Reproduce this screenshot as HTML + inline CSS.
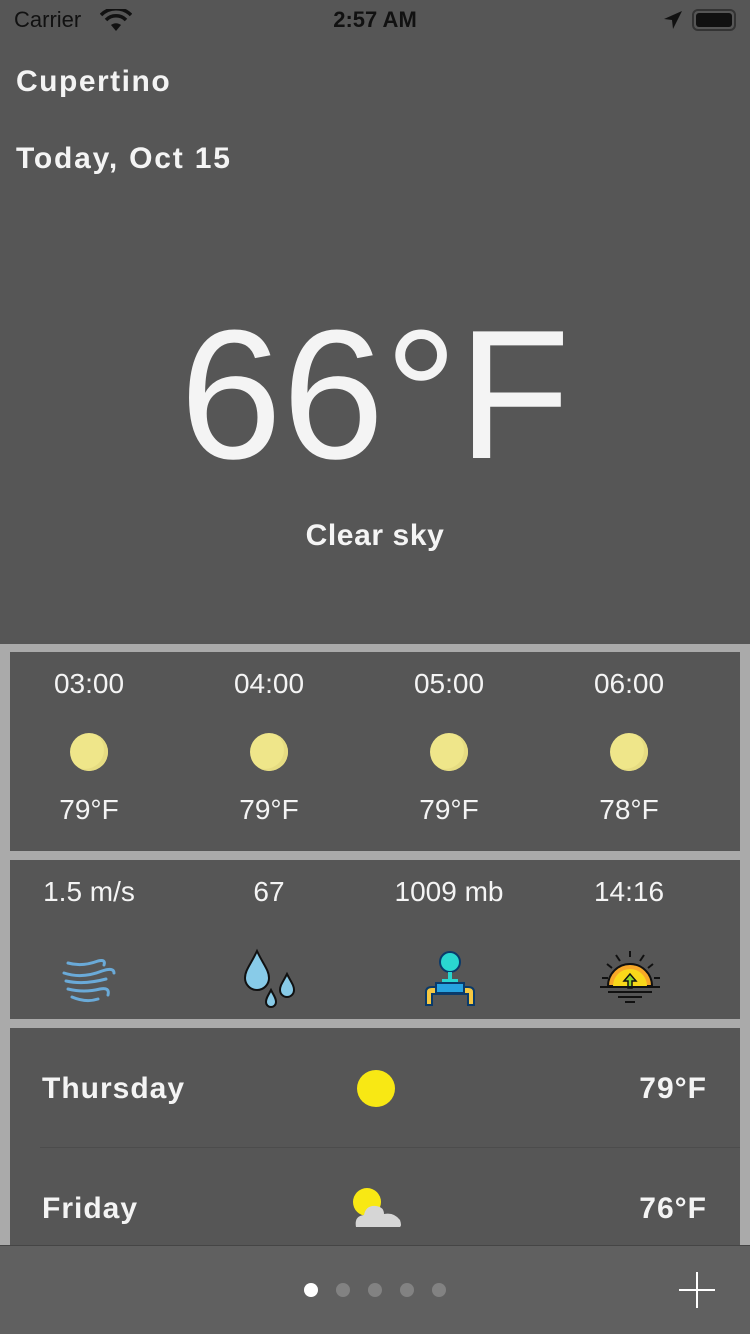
<!DOCTYPE html>
<html><head><meta charset="utf-8"><style>
*{margin:0;padding:0;box-sizing:border-box}
body{width:750px;height:1334px;background:#565656;position:relative;overflow:hidden;font-family:"Liberation Sans",sans-serif;color:#f4f4f4}
.a{position:absolute;white-space:nowrap}
.c{transform:translateX(-50%)}
.p{position:absolute;left:10px;width:730px;background:#565656}
.l{font-size:28px;font-weight:300}
.sun{position:absolute;width:38px;height:38px;border-radius:50%;background:#efe68a;box-shadow:inset -4px -2px 0 #e6dc82}
.b{font-size:30px;font-weight:bold;letter-spacing:1px}
</style></head><body>
<div class="a" style="left:14px;top:7px;font-size:22px;color:#111">Carrier</div>
<svg class="a" style="left:100px;top:9px" width="32" height="24" viewBox="0 0 32 24"><path d="M16 22 L11 16 A8 8 0 0 1 21 16Z" fill="#111"/><path d="M6 11 A14 14 0 0 1 26 11" stroke="#111" stroke-width="3.5" fill="none"/><path d="M1 6 A21 21 0 0 1 31 6" stroke="#111" stroke-width="3.5" fill="none"/></svg>
<div class="a c" style="left:375px;top:7px;font-size:22px;font-weight:bold;color:#111">2:57 AM</div>
<svg class="a" style="left:662px;top:10px" width="22" height="20" viewBox="0 0 22 20"><path d="M20 1 L2 9 L10 10 L11 19Z" fill="#111"/></svg>
<div class="a" style="left:692px;top:9px;width:44px;height:22px;border:2px solid #333;border-radius:6px;padding:2px"><div style="width:100%;height:100%;background:#111;border-radius:3px"></div></div>
<div class="a" style="left:16px;top:65px;font-size:30px;font-weight:bold;letter-spacing:1.5px">Cupertino</div>
<div class="a" style="left:16px;top:142px;font-size:30px;font-weight:bold;letter-spacing:1.8px">Today, Oct 15</div>
<div class="a c" style="left:375px;top:302px;font-size:184px;line-height:1">66°F</div>
<div class="a c" style="left:375px;top:519px;font-size:30px;font-weight:bold;letter-spacing:.6px">Clear sky</div>
<div class="a" style="left:0;top:644px;width:750px;height:601px;background:#aaa"></div>
<div class="p" style="top:652px;height:199px"></div>
<div class="p" style="top:860px;height:159px"></div>
<div class="p" style="top:1028px;height:217px"></div>
<div class="a c l" style="left:89px;top:668px">03:00</div>
<div class="a c l" style="left:269px;top:668px">04:00</div>
<div class="a c l" style="left:449px;top:668px">05:00</div>
<div class="a c l" style="left:629px;top:668px">06:00</div>
<div class="sun" style="left:70px;top:733px"></div>
<div class="sun" style="left:250px;top:733px"></div>
<div class="sun" style="left:430px;top:733px"></div>
<div class="sun" style="left:610px;top:733px"></div>
<div class="a c l" style="left:89px;top:794px">79°F</div>
<div class="a c l" style="left:269px;top:794px">79°F</div>
<div class="a c l" style="left:449px;top:794px">79°F</div>
<div class="a c l" style="left:629px;top:794px">78°F</div>
<div class="a c l" style="left:89px;top:876px">1.5 m/s</div>
<div class="a c l" style="left:269px;top:876px">67</div>
<div class="a c l" style="left:449px;top:876px">1009 mb</div>
<div class="a c l" style="left:629px;top:876px">14:16</div>
<svg class="a" style="left:62px;top:953px" width="56" height="54" viewBox="0 0 56 54"><g fill="none" stroke="#6aaad8" stroke-width="3" stroke-linecap="round"><path d="M6 10 Q20 14 36 8 Q44 6 42 12"/><path d="M2 20 Q20 26 40 18 Q52 14 52 20"/><path d="M4 28 Q22 32 44 26"/><path d="M6 36 Q22 40 38 36 Q48 34 46 42"/><path d="M10 44 Q24 50 36 46"/></g></svg>
<svg class="a" style="left:242px;top:948px" width="58" height="64" viewBox="0 0 58 64"><g fill="#88cbe8" stroke="#111" stroke-width="2"><path d="M15 3 C9 16 3 22 3 30 A12 12 0 0 0 27 30 C27 22 21 16 15 3Z"/><path d="M45 26 C41 34 38 37 38 42 A7 7 0 0 0 52 42 C52 37 49 34 45 26Z"/><path d="M29 42 C26 48 24 50 24 54 A5 5 0 0 0 34 54 C34 50 32 48 29 42Z"/></g></svg>
<svg class="a" style="left:422px;top:950px" width="56" height="60" viewBox="0 0 56 60"><circle cx="28" cy="12" r="10" fill="#2ad6d0" stroke="#0a3a6a" stroke-width="2"/><rect x="26" y="22" width="4" height="8" fill="#2ad6d0"/><rect x="20" y="29" width="16" height="4" fill="#2ad6d0"/><path d="M4 55 V42 Q4 37 10 37 H46 Q52 37 52 42 V55 H46 V44 H10 V55Z" fill="#f5c842" stroke="#0a3a6a" stroke-width="2"/><rect x="14" y="33" width="28" height="10" fill="#27a3e0" stroke="#0a3a6a" stroke-width="2"/></svg>
<svg class="a" style="left:600px;top:950px" width="62" height="62" viewBox="0 0 62 62"><g stroke="#111" stroke-width="2"><path d="M30 1v6M16 5l4 6M44 5l-4 6M7 14l5 4M53 14l-5 4M2 28h6M54 28h6"/></g><path d="M8 36 A22 22 0 0 1 52 36Z" fill="#f8a828" stroke="#111" stroke-width="2"/><path d="M13 36 A17 17 0 0 1 47 36Z" fill="#f9d81a"/><path d="M30 24 L24 31 H28 V38 H32 V31 H36Z" fill="#8ed42a" stroke="#111" stroke-width="1.5"/><g stroke="#111" stroke-width="2"><path d="M0 37h60M8 42h44M18 47h24M25 52h10"/></g></svg>
<div class="a b" style="left:42px;top:1072px">Thursday</div>
<div class="a" style="left:357px;top:1070px;width:38px;height:37px;border-radius:50%;background:#f8e814"></div>
<div class="a b" style="right:43px;top:1072px">79°F</div>
<div class="a" style="left:40px;top:1147px;width:700px;height:1px;background:#4c4c4c"></div>
<div class="a b" style="left:42px;top:1192px">Friday</div>
<div class="a" style="left:353px;top:1188px;width:28px;height:28px;border-radius:50%;background:#f8e814"></div>
<svg class="a" style="left:354px;top:1196px" width="48" height="32" viewBox="0 0 48 32"><path d="M2 31 Q0 20 10 19 Q12 9 22 10 Q30 11 30 18 Q40 16 46 24 Q48 30 46 31Z" fill="#d6d6d6"/></svg>
<div class="a b" style="right:43px;top:1192px">76°F</div>
<div class="a" style="left:0;top:1245px;width:750px;height:89px;background:#606060;border-top:1px solid #454545"></div>
<div class="a" style="left:304px;top:1283px;width:14px;height:14px;border-radius:50%;background:#fff"></div>
<div class="a" style="left:336px;top:1283px;width:14px;height:14px;border-radius:50%;background:#828282"></div>
<div class="a" style="left:368px;top:1283px;width:14px;height:14px;border-radius:50%;background:#828282"></div>
<div class="a" style="left:400px;top:1283px;width:14px;height:14px;border-radius:50%;background:#828282"></div>
<div class="a" style="left:432px;top:1283px;width:14px;height:14px;border-radius:50%;background:#828282"></div>
<div class="a" style="left:679px;top:1289px;width:36px;height:2px;background:#fff"></div>
<div class="a" style="left:696px;top:1272px;width:2px;height:36px;background:#fff"></div>
</body></html>
